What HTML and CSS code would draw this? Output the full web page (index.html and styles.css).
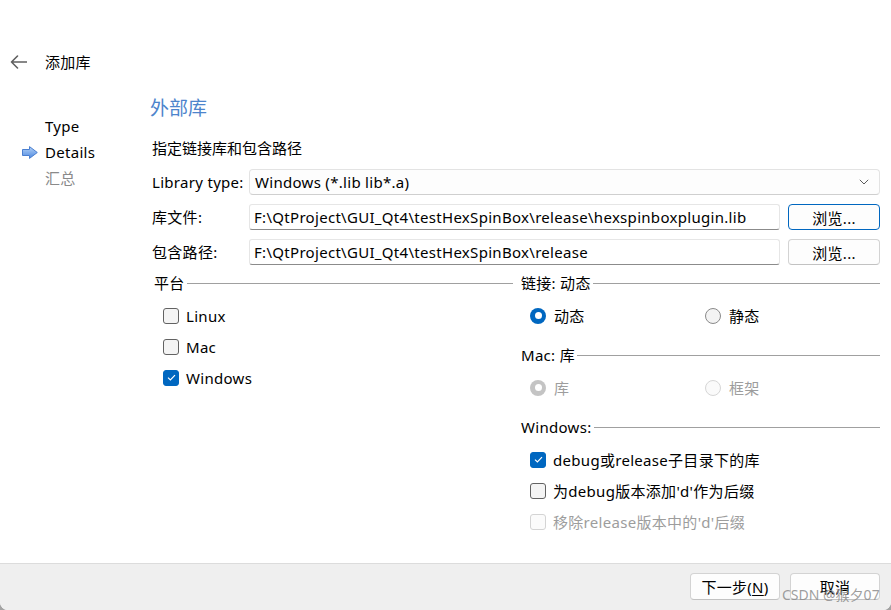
FILE: index.html
```html
<!DOCTYPE html>
<html lang="zh">
<head>
<meta charset="utf-8">
<title>添加库</title>
<link rel="stylesheet" href="styles.css">
</head>
<body>
<div class="window">
  <header class="top">
    <svg class="back" width="17" height="14" viewBox="0 0 17 14"><path d="M16.5 7 H1.5 M7.5 1 L1.5 7 L7.5 13" fill="none" stroke="#606060" stroke-width="1.6" stroke-linecap="round" stroke-linejoin="round"/></svg>
    <span class="top-title">添加库</span>
  </header>
  <div class="content">
    <nav class="steps">
      <div class="step"><span class="step-mark"></span><span>Type</span></div>
      <div class="step"><span class="step-mark"><svg width="16" height="13" viewBox="0 0 16 13"><defs><linearGradient id="ag" x1="0" y1="0" x2="0" y2="1"><stop offset="0" stop-color="#b4d2f7"/><stop offset="1" stop-color="#4f8ae0"/></linearGradient></defs><path d="M0.5 3.5 H7.5 V0.6 L15.3 6.5 L7.5 12.4 V9.5 H0.5 Z" fill="url(#ag)" stroke="#4a7fd0" stroke-width="1" stroke-linejoin="round"/></svg></span><span>Details</span></div>
      <div class="step step-todo"><span class="step-mark"></span><span>汇总</span></div>
    </nav>
    <main class="page">
      <h1 class="page-title">外部库</h1>
      <p class="page-sub">指定链接库和包含路径</p>
      <div class="form">
        <span class="label">Library type:</span>
        <div class="combo"><span>Windows (*.lib lib*.a)</span><svg width="10" height="6" viewBox="0 0 10 6"><path d="M0.8 0.8 L5 5 L9.2 0.8" fill="none" stroke="#5c5c5c" stroke-width="1"/></svg></div>
        <span class="label">库文件:</span>
        <div class="input">F:\QtProject\GUI_Qt4\testHexSpinBox\release\hexspinboxplugin.lib</div>
        <div class="btn focus">浏览...</div>
        <span class="label">包含路径:</span>
        <div class="input">F:\QtProject\GUI_Qt4\testHexSpinBox\release</div>
        <div class="btn">浏览...</div>
      </div>
      <div class="groups">
        <div class="col">
          <section class="group">
            <div class="group-title">平台</div>
            <div class="group-body">
              <label class="opt"><span class="cb"></span>Linux</label>
              <label class="opt"><span class="cb"></span>Mac</label>
              <label class="opt"><span class="cb on"><svg width="9" height="7" viewBox="0 0 9 7"><path d="M1 3.6 L3.4 6 L8 1.2" fill="none" stroke="#fff" stroke-width="1.2"/></svg></span>Windows</label>
            </div>
          </section>
        </div>
        <div class="col">
          <section class="group">
            <div class="group-title">链接: 动态</div>
            <div class="group-body radios">
              <label class="opt"><span class="rb on"></span>动态</label>
              <label class="opt"><span class="rb"></span>静态</label>
            </div>
          </section>
          <section class="group">
            <div class="group-title">Mac: 库</div>
            <div class="group-body radios">
              <label class="opt dis"><span class="rb on dis-on"></span>库</label>
              <label class="opt dis"><span class="rb dis-off"></span>框架</label>
            </div>
          </section>
          <section class="group">
            <div class="group-title">Windows:</div>
            <div class="group-body">
              <label class="opt"><span class="cb on"><svg width="9" height="7" viewBox="0 0 9 7"><path d="M1 3.6 L3.4 6 L8 1.2" fill="none" stroke="#fff" stroke-width="1.2"/></svg></span>debug或release子目录下的库</label>
              <label class="opt"><span class="cb"></span>为debug版本添加'd'作为后缀</label>
              <label class="opt dis"><span class="cb dis-off"></span>移除release版本中的'd'后缀</label>
            </div>
          </section>
        </div>
      </div>
    </main>
  </div>
  <footer class="bar">
    <div class="btn wide">下一步(<u>N</u>)</div>
    <div class="btn wide">取消</div>
  </footer>
  <div class="watermark">CSDN @猴夕07</div>
</div>
</body>
</html>
```
FILE: styles.css
```css
* { box-sizing: border-box; }
html, body { margin: 0; padding: 0; }
body {
  background: #a3a3a3;
  font-family: "Noto Sans", "Noto Sans CJK SC", sans-serif;
  font-size: 15px;
  letter-spacing: 0.3px;
  color: #000;
}
.window {
  position: relative;
  width: 891px;
  height: 610px;
  background: #fff;
  display: flex;
  flex-direction: column;
  border-radius: 0 0 8px 8px;
  overflow: hidden;
}
.top {
  display: flex;
  align-items: center;
  height: 36px;
  margin-top: 44px;
  padding-left: 10px;
}
.back { display: block; }
.top-title { margin-left: 18px; line-height: 20px; }

.content { display: flex; }
.steps { width: 152px; flex: none; padding-top: 33px; }
.step {
  display: flex;
  align-items: center;
  height: 26px;
  line-height: 20px;
}
.step-mark {
  width: 45px;
  flex: none;
  display: flex;
  align-items: center;
  padding-left: 22px;
}
.step-mark svg { display: block; }
.step-todo { color: #8a8a8a; }

.page { flex: 1; padding: 15px 11px 0 0; }
.page-title {
  margin: 0 0 0 -2px;
  font-size: 19px;
  line-height: 26px;
  font-weight: normal;
  letter-spacing: 0;
  color: #4d84cc;
}
.page-sub { margin: 17px 0 0; line-height: 20px; letter-spacing: 0; }

.form {
  margin-top: 11px;
  display: grid;
  grid-template-columns: 89px 1fr 92px;
  column-gap: 8px;
  row-gap: 9px;
  align-items: center;
}
.label { white-space: nowrap; line-height: 20px; }
.combo {
  grid-column: 2 / 4;
  height: 26px;
  border: 1px solid #e3e3e3;
  border-bottom-color: #cfcfcf;
  border-radius: 4px;
  background: #fdfdfd;
  display: flex;
  align-items: center;
  justify-content: space-between;
  padding: 0 10px 0 5px;
}
.combo svg { display: block; }
.input {
  height: 26px;
  border: 1px solid #e6e6e6;
  border-bottom-color: #8b8b8b;
  border-radius: 3px;
  padding: 0 4px;
  display: flex;
  align-items: center;
  white-space: nowrap;
  overflow: hidden;
}
.btn {
  height: 26px;
  border: 1px solid #d3d3d3;
  border-bottom-color: #c2c2c2;
  border-radius: 4px;
  background: #fdfdfd;
  display: flex;
  align-items: center;
  justify-content: center;
  white-space: nowrap;
}
.btn.focus { border-color: #0067c0; }

.groups {
  margin-top: 9px;
  display: grid;
  grid-template-columns: 1fr 1fr;
  column-gap: 6px;
  align-items: start;
}
.group + .group { margin-top: 15px; }
.group-title {
  display: flex;
  align-items: center;
  height: 18px;
  line-height: 18px;
  padding-left: 2px;
  white-space: nowrap;
}
.group-title::after {
  content: "";
  flex: 1;
  height: 1px;
  background: #a0a0a0;
  margin-left: 2px;
}
.group-body { padding: 8px 0 0 11px; }
.radios { display: grid; grid-template-columns: 1fr 1fr; }
.opt {
  display: flex;
  align-items: center;
  gap: 7px;
  height: 31px;
  white-space: nowrap;
}
.opt.dis { color: #9d9d9d; }

.cb {
  width: 16px;
  height: 16px;
  flex: none;
  border: 1px solid #626262;
  border-radius: 3px;
  background: #f4f4f4;
}
.cb.on {
  border-color: #0067c0;
  background: #0067c0;
  display: flex;
  align-items: center;
  justify-content: center;
}
.cb svg { display: block; }
.cb.dis-off { border-color: #d4d4d4; background: #fbfbfb; }

.rb {
  width: 16px;
  height: 16px;
  flex: none;
  border-radius: 50%;
  border: 1px solid #8a8a8a;
  background: #f3f3f3;
  margin-right: 1px;
}
.rb.on {
  border: none;
  background: #0067c0;
  display: flex;
  align-items: center;
  justify-content: center;
}
.rb.on::after {
  content: "";
  width: 7px;
  height: 7px;
  border-radius: 50%;
  background: #fff;
}
.rb.dis-on { background: #c4c4c4; }
.rb.dis-off { border-color: #d6d6d6; background: #fafafa; }

.bar {
  margin-top: auto;
  height: 47px;
  border-top: 1px solid #dcdcdc;
  background: #efefef;
  display: flex;
  justify-content: flex-end;
  gap: 10px;
  padding: 9px 11px 0 0;
}
.btn.wide { width: 90px; height: 27px; }
.btn u { text-underline-offset: 2px; }

.watermark {
  position: absolute;
  left: 782px;
  top: 586px;
  font-size: 14px;
  line-height: 18px;
  letter-spacing: 0;
  color: rgba(140, 140, 140, 0.85);
  white-space: nowrap;
}
```
